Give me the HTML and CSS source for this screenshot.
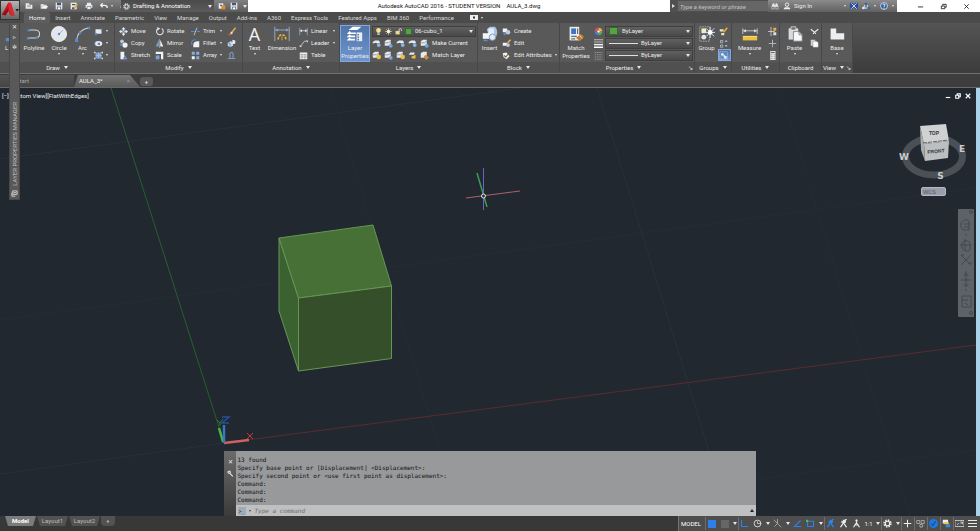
FILE: index.html
```html
<!DOCTYPE html>
<html lang="en">
<head>
<meta charset="utf-8">
<title>Autodesk AutoCAD 2016</title>
<link rel="stylesheet" href="styles.css">
</head>
<body>
<svg class="sprite" aria-hidden="true">
  <symbol id="new" viewBox="0 0 12 12"><path d="M1 2h5l1 2h4v6H1z" fill="#e9edf2"/><path d="M3 5h6M3 7h6" stroke="#8d949c"/></symbol>
  <symbol id="open" viewBox="0 0 12 12"><path d="M1 3h4l1 1h4v2H4L2 10H1z" fill="#d5dbe2"/><path d="M4 6h8l-2 4H2z" fill="#f1f4f7"/></symbol>
  <symbol id="save" viewBox="0 0 12 12"><path d="M1 1h10v10H1z" fill="#dbe3ef"/><path d="M3 1h6v4H3zM3 7h6v4H3z" fill="#4c5665"/><path d="M4 8h4v3H4z" fill="#fff"/></symbol>
  <symbol id="saveas" viewBox="0 0 12 12"><path d="M1 1h9v10H1z" fill="#e6e9ee"/><path d="M3 3h5v2H3zM3 8h4v3H3z" fill="#4c5665"/><path d="M5 9l5-6 2 1-5 6z" fill="#e6a436"/></symbol>
  <symbol id="print" viewBox="0 0 12 12"><path d="M3 1h6v3H3zM1 4h10v5H1z" fill="#e8ecf1"/><path d="M3 7h6v4H3z" fill="#fff" stroke="#59616c"/></symbol>
  <symbol id="undo" viewBox="0 0 12 12"><path d="M4 2L1 5l3 3M1 5h6q4 0 4 4" fill="none" stroke="#eee" stroke-width="2"/></symbol>
  <symbol id="redo" viewBox="0 0 12 12"><path d="M8 2l3 3-3 3M11 5H5Q1 5 1 9" fill="none" stroke="#a0a0a0" stroke-width="2"/></symbol>
  <symbol id="gear" viewBox="0 0 12 12"><circle cx="6" cy="6" r="4.6" fill="none" stroke="#eee" stroke-width="2" stroke-dasharray="2 1.6"/><circle cx="6" cy="6" r="3" fill="none" stroke="#eee" stroke-width="1.6"/></symbol>
  <symbol id="lockdoc" viewBox="0 0 12 12"><path d="M1 2h7v8H1z" fill="#e8ecf1"/><path d="M5 5h6v6H5z" fill="#e08a2c"/><path d="M3 4h3v2H3z" fill="#3e6cb0"/></symbol>
  <symbol id="binoc" viewBox="0 0 12 12"><path d="M1 11V6l2-4h2v9zM11 11V6L9 2H7v9zM5 4h2v3H5z" fill="#e6e6e6"/><path d="M2 7h2v3H2zM8 7h2v3H8z" fill="#4b4b4b"/></symbol>
  <symbol id="person" viewBox="0 0 12 12"><circle cx="6" cy="4" r="2.6" fill="none" stroke="#eee" stroke-width="1.4"/><path d="M1 11q0-3 3-3h4q3 0 3 3z" fill="#eee"/></symbol>
  <symbol id="xchange" viewBox="0 0 12 12"><path d="M0 1h4l2 3 2-3h4v9H8L6 7l-2 3H0z" fill="#234f9c"/><path d="M2 2l8 8M10 2l-8 8" stroke="#d3e0f2" stroke-width="1.4"/></symbol>
  <symbol id="a360" viewBox="0 0 12 12"><path d="M6 2L2 9h8z" fill="none" stroke="#dce6f5" stroke-width="1.5"/><circle cx="6" cy="3" r="2" fill="#2f5fae"/><circle cx="2" cy="9" r="2" fill="#dce6f5"/><circle cx="10" cy="9" r="2" fill="#2f5fae"/></symbol>
  <symbol id="help" viewBox="0 0 12 12"><circle cx="6" cy="6" r="5.2" fill="#34609c" stroke="#fff"/><path d="M4.300 4.500Q4.500 3 6 3t1.700 1.500Q7.700 5.500 6 6.500V7.500M6 8.500v1.500" fill="none" stroke="#fff" stroke-width="1.300"/></symbol>
  <symbol id="line" viewBox="0 0 20 20"><path d="M3 17L17 3" stroke="#ccc"/><path d="M1 15h4v4H1zM15 1h4v4h-4z" fill="#568ad4"/></symbol>
  <symbol id="polyline" viewBox="0 0 20 20"><path d="M4 5h7q6 0 6 5t-6 5H3" fill="none" stroke="#d2d5d8" stroke-width="1.3"/><path d="M2 4h3v3H2zM1 14h3v3H1zM12 13h3v3h-3z" fill="#568ad4"/></symbol>
  <symbol id="circle" viewBox="0 0 20 20"><circle cx="10" cy="10" r="9.500" fill="#e3e7eb" stroke="#f6f7f8"/><path d="M10 10l5-5" stroke="#7ba2d4"/><circle cx="10" cy="10" r="1.500" fill="#568ad4"/></symbol>
  <symbol id="arc" viewBox="0 0 20 20"><path d="M2 18Q3 5 18 2" fill="none" stroke="#d2d5d8" stroke-width="1.300"/><path d="M0 16h4v4H0zM16 1h3v3h-3zM5 7h3v3H5z" fill="#568ad4"/></symbol>
  <symbol id="rect" viewBox="0 0 12 12"><path d="M2 3h8v6H2z" fill="#e6e9ed"/><path d="M1 8h3v3H1zM9 2h2v2H9z" fill="#568ad4"/></symbol>
  <symbol id="ellipse" viewBox="0 0 12 12"><ellipse cx="6" cy="6" rx="5" ry="3.500" fill="#e6e9ed"/><path d="M5 5h3v3H5zM0 5h2v2H0z" fill="#568ad4"/></symbol>
  <symbol id="hatch" viewBox="0 0 12 12"><path d="M2 2h8v8H2z" fill="#7fa3d6"/><path d="M2 6h8M6 2v8" stroke="#a9c2e6"/><path d="M0 1h2v2H0zM10 1h2v2h-2zM0 9h2v2H0zM10 9h2v2h-2z" fill="#ddd"/></symbol>
  <symbol id="move" viewBox="0 0 12 12"><path d="M6 0l2.500 3H7v2h2V3.500L12 6 9 8.500V7H7v2h1.500L6 12 3.500 9H5V7H3v1.500L0 6l3-2.500V5h2V3H3.500z" fill="#e6e9ed"/><circle cx="6" cy="6" r="1.500" fill="#568ad4"/></symbol>
  <symbol id="copy" viewBox="0 0 12 12"><circle cx="4" cy="3" r="2.500" fill="#bfc9d6"/><circle cx="8" cy="8" r="3.500" fill="#f0f2f4"/><path d="M1 6h3v3H1z" fill="#568ad4"/></symbol>
  <symbol id="stretch" viewBox="0 0 12 12"><path d="M2 1h5v10H2z" fill="#f0f2f4"/><path d="M7 5l4 6H7z" fill="#8db0de"/><path d="M6 8h3v3H6z" fill="#568ad4"/></symbol>
  <symbol id="rotate" viewBox="0 0 12 12"><path d="M4 2a4.500 4.500 0 1 0 5 0" fill="none" stroke="#d9dcdf" stroke-width="1.500"/><path d="M3 0l4 2-4 3z" fill="#d9dcdf"/></symbol>
  <symbol id="mirror" viewBox="0 0 12 12"><path d="M5 1v9H1z" fill="#7ba2d4"/><path d="M7 1v9h4z" fill="#f0f2f4"/><path d="M6 0v12" stroke="#ddd" stroke-width=".6"/></symbol>
  <symbol id="scale" viewBox="0 0 12 12"><path d="M1 1h10v10H8V4H1z" fill="#f0f2f4"/><path d="M1 6h5v5H1z" fill="#7ba2d4"/></symbol>
  <symbol id="trim" viewBox="0 0 12 12"><path d="M0 6h5M8 6h4" stroke="#568ad4" stroke-width="1.500"/><path d="M8 1L4 11" stroke="#ddd"/></symbol>
  <symbol id="fillet" viewBox="0 0 12 12"><path d="M3 11V8q0-5 6-5h2v8z" fill="#f0f2f4"/><path d="M1 8V5q0-4 5-4" fill="none" stroke="#568ad4" stroke-width="1.500"/></symbol>
  <symbol id="array" viewBox="0 0 12 12"><path d="M1 1h4v4H1zM7 1h4v4H7zM7 7h4v4H7z" fill="#86aee2"/><path d="M1 7h4v4H1z" fill="#f0f2f4"/></symbol>
  <symbol id="erase" viewBox="0 0 12 12"><path d="M11 0L6 6l1 2 5-6z" fill="#e2ad50"/><path d="M6 6L4 8l2 2 2-2z" fill="#f0dfd2"/><path d="M4 8l-3 3h4l1-1z" fill="#d95a3a"/></symbol>
  <symbol id="explode" viewBox="0 0 12 12"><path d="M1 5l4-2 3 1v5L4 11 1 9z" fill="#c6d6ec"/><path d="M7 1l4 1v4L8 7z" fill="#e9eef5"/><path d="M1 5l3 1v5" fill="none" stroke="#4e79b8"/></symbol>
  <symbol id="offset" viewBox="0 0 12 12"><path d="M1 10h3V7q-1-5 2-5t2 5v3h3z" fill="none" stroke="#7f9ac2" stroke-width="1.500"/></symbol>
  <symbol id="dimension" viewBox="0 0 20 20"><path d="M1 1v18M19 1v18M2 5h16" stroke="#a9bad2"/><path d="M1 5l4-2v4zM19 5l-4-2v4z" fill="#7aa5e0"/><path d="M5 17q1-6 5-6t5 6" fill="none" stroke="#eab03a" stroke-width="2" stroke-dasharray="3 1.500"/><path d="M10 13v5" stroke="#eab03a"/></symbol>
  <symbol id="linear" viewBox="0 0 12 12"><path d="M1 1v10M11 1v10" stroke="#8cb0e0"/><path d="M1 5h10" stroke="#ddd"/><path d="M1 5l3-2v4zM11 5L8 3v4z" fill="#ddd"/></symbol>
  <symbol id="leader" viewBox="0 0 12 12"><path d="M2 10L7 3h3" fill="none" stroke="#ddd"/><path d="M1 11V8l3 2zM9 2h3v3" fill="#ddd"/></symbol>
  <symbol id="table" viewBox="0 0 12 12"><path d="M1 2h10v9H1z" fill="#f0f2f4"/><path d="M1 5h10M1 8h10M4 4v7M8 4v7" stroke="#777" stroke-width=".7"/></symbol>
  <symbol id="layers" viewBox="0 0 20 20"><path d="M7 1h11l-5 4H2z" fill="#fff"/><path d="M4 7l-2 2h9M4 11l-2 2h8M4 15l-2 2h8" fill="none" stroke="#fff" stroke-width="2"/><path d="M12 8h7v11h-7z" fill="#e9edf2"/><path d="M13 10h2v2h-2zM13 13h2v2h-2zM13 16h2v2h-2z" fill="#5c7fae"/></symbol>
  <symbol id="bulb" viewBox="0 0 12 12"><path d="M6 0q4 0 4 3.500Q10 6 8 8H4Q2 6 2 3.500 2 0 6 0z" fill="#f6e58c"/><path d="M4 9h4v3H4z" fill="#c8c8c8"/></symbol>
  <symbol id="sun" viewBox="0 0 12 12"><path d="M6 0v12M0 6h12M2 2l8 8M10 2l-8 8" stroke="#e8e2bb"/><circle cx="6" cy="6" r="3" fill="#fbf4c6"/></symbol>
  <symbol id="lock" viewBox="0 0 12 12"><path d="M1 5h7v6H1z" fill="#f0d88a"/><path d="M7 6V3q0-2 2-2t2 2v2" fill="none" stroke="#ddd" stroke-width="1.500"/></symbol>
  <symbol id="lay1" viewBox="0 0 12 12"><path d="M1 4l3-2h5l2 3-4 1-2-1-4 1z" fill="#e6e9ed"/><circle cx="9" cy="8" r="2.500" fill="#8bb4e8"/></symbol>
  <symbol id="lay2" viewBox="0 0 12 12"><path d="M1 3l3-2h5v6l-3 2H1z" fill="#e6e9ed"/><path d="M1 5h5l3-2" fill="none" stroke="#7b8796"/><circle cx="9" cy="9" r="2.500" fill="#77a5e0"/></symbol>
  <symbol id="lay3" viewBox="0 0 12 12"><path d="M1 3l3-2h5v6l-3 2H1z" fill="#e6e9ed"/><path d="M1 5h5l3-2" fill="none" stroke="#7b8796"/><circle cx="9" cy="8" r="3" fill="#efc03c"/></symbol>
  <symbol id="lay4" viewBox="0 0 12 12"><path d="M1 5l2-3h6l-1 3z" fill="#e6e9ed"/><path d="M4 8l6-3v5H6z" fill="#efc03c"/></symbol>
  <symbol id="match" viewBox="0 0 12 12"><path d="M1 3l3-2h5v6l-3 2H1z" fill="#e6e9ed"/><path d="M5 7l3-2 4 4-4 3z" fill="#d58b3c"/></symbol>
  <symbol id="insert" viewBox="0 0 20 20"><path d="M6 4l4-3h6q3 2 3 8l-2 7-8-2z" fill="#a9c4e8"/><path d="M8 3h7v8H8z" fill="#e6edf7"/><path d="M1 9h10v7H1z" fill="#f4f6f8"/><circle cx="13" cy="14" r="4" fill="#e4e9ee" stroke="#6c8cba"/><path d="M2 18h5" stroke="#568ad4" stroke-width="2"/></symbol>
  <symbol id="create" viewBox="0 0 12 12"><path d="M1 2h6v5H1z" fill="#f0f2f4"/><circle cx="8" cy="7" r="3" fill="#bdcbdc"/><path d="M2 8h3v3H2z" fill="#568ad4"/></symbol>
  <symbol id="edit" viewBox="0 0 12 12"><path d="M1 5h6v4H1z" fill="#f0f2f4"/><circle cx="8" cy="8" r="2.500" fill="#bdcbdc"/><path d="M7 4l4-4 1 2-4 4z" fill="#efb03c"/></symbol>
  <symbol id="attr" viewBox="0 0 12 12"><path d="M1 3l5-1 4 5-4 4-4-3z" fill="#f0f2f4"/><path d="M3 6l2 2 5-6" fill="none" stroke="#795a24" stroke-width="1.500"/></symbol>
  <symbol id="matchprop" viewBox="0 0 20 20"><path d="M2 1h12v17H2z" fill="#e9edf2"/><path d="M4 3h6v7H4z" fill="#3a75bd"/><path d="M4 13h7M4 16h5M12 3v7" stroke="#66707c" stroke-width="1.500"/><path d="M10 15l6-5 4 3-5 6z" fill="#c27b31"/><path d="M14 11l4 5" stroke="#f2ddb9"/></symbol>
  <symbol id="wheel" viewBox="0 0 12 12"><path d="M6 6V1a5 5 0 0 1 5 5z" fill="#efb03c"/><path d="M6 6h5a5 5 0 0 1-5 5z" fill="#5eab4d"/><path d="M6 6v5a5 5 0 0 1-5-5z" fill="#4a7ed0"/><path d="M6 6H1a5 5 0 0 1 5-5z" fill="#da4e6d"/><circle cx="6" cy="6" r="1.500" fill="#fff"/></symbol>
  <symbol id="weight" viewBox="0 0 12 12"><path d="M0 1h12M0 4h12" stroke="#ddd"/><path d="M0 7.500h12" stroke="#eee" stroke-width="2"/><path d="M0 11h12" stroke="#fff" stroke-width="2"/></symbol>
  <symbol id="ltype" viewBox="0 0 12 12"><path d="M1 2h10M1 5h10M1 8h10M1 11h10" stroke="#aaa" stroke-dasharray="2 1"/></symbol>
  <symbol id="group" viewBox="0 0 20 20"><path d="M1 1h12v18H1z" fill="none" stroke="#bbb" stroke-dasharray="2 1"/><path d="M3 3h6v6H3z" fill="#f2edc2"/><circle cx="6" cy="14" r="3" fill="#e4e8ed"/><path d="M14 1v14M7 8h13M9 3l10 10M19 3L9 13" stroke="#cfe3fc" stroke-width="1.200"/><circle cx="14" cy="8" r="3" fill="#fff"/></symbol>
  <symbol id="ungroup" viewBox="0 0 12 12"><path d="M1 3h5v3H1zM3 8h4v3H3z" fill="#e9e5bd"/><path d="M6 7l5-6" stroke="#efb03c" stroke-width="2"/></symbol>
  <symbol id="gredit" viewBox="0 0 12 12"><path d="M2 2h3v3H2zM2 8h3v3H2z" fill="none" stroke="#bfc7d1"/><path d="M8 3h3M8 9h3" stroke="#9ab4da" stroke-width="2"/></symbol>
  <symbol id="gsel" viewBox="0 0 12 12"><path d="M1 1h10v10H1z" fill="none" stroke="#b8d1f5" stroke-dasharray="2 1"/><path d="M3 3h3v3H3zM7 7h3v3H7z" fill="#fff"/><path d="M6 4l4 4H6z" fill="#dce9fb"/></symbol>
  <symbol id="measure" viewBox="0 0 20 20"><path d="M1 3v7M19 3v7M2 6h16" stroke="#ddd"/><path d="M1 6l4-2v4zM19 6l-4-2v4z" fill="#ddd"/><path d="M1 13h18v5H1z" fill="#f1c137"/><path d="M1 13h18" stroke="#fff3b6"/></symbol>
  <symbol id="qsel" viewBox="0 0 12 12"><path d="M4 0v12M0 6h9" stroke="#ddd"/><path d="M7 1h4v4H7z" fill="#eba948"/><path d="M7 7h4v4H7z" fill="#ddd"/></symbol>
  <symbol id="point" viewBox="0 0 12 12"><path d="M6 1v10M1 6h10" stroke="#bfd0e6"/></symbol>
  <symbol id="calc" viewBox="0 0 12 12"><path d="M3 0h7v12H3z" fill="#e6e9ed"/><path d="M4 2h5" stroke="#666" stroke-width="1.500"/><path d="M4 5h5M4 7.500h5M4 10h5" stroke="#777" stroke-dasharray="1 1"/></symbol>
  <symbol id="paste" viewBox="0 0 20 20"><path d="M2 3h12v14H2z" fill="#d9dcdf"/><path d="M5 1h6v4H5z" fill="#6a6d70" stroke="#ddd"/><path d="M8 7h7l4 4v8H8z" fill="#f6f7f8" stroke="#727578"/><path d="M15 7v4h4" fill="none" stroke="#727578"/></symbol>
  <symbol id="cut" viewBox="0 0 12 12"><path d="M1 3l5 4 5-4M4 9l2-2 2 2" fill="none" stroke="#e9e9e9" stroke-width="1.500"/></symbol>
  <symbol id="clip" viewBox="0 0 12 12"><path d="M1 1h6v8H1z" fill="#cfd3d8"/><path d="M4 3h5l2 2v6H4z" fill="#fff" stroke="#777" stroke-width=".5"/></symbol>
  <symbol id="base" viewBox="0 0 20 20"><path d="M2 3h7v6h10v8H2z" fill="#eceef0"/></symbol>
  <symbol id="wrench" viewBox="0 0 12 12"><path d="M2 2v3l3 1 5 5M2 2l3 0 1 3" fill="none" stroke="#eee" stroke-width="1.800"/></symbol>
  <symbol id="ortho" viewBox="0 0 12 12"><path d="M2 1v9h9" fill="none" stroke="#2e7fe8" stroke-width="1.500"/></symbol>
  <symbol id="polar" viewBox="0 0 12 12"><circle cx="6" cy="6" r="4.500" fill="none" stroke="#ddd" stroke-width="1.200"/><path d="M6 6h5M6 6V3" stroke="#ddd"/></symbol>
  <symbol id="iso" viewBox="0 0 12 12"><path d="M1 1l10 10M6 0v6L2 10" fill="none" stroke="#bbb"/></symbol>
  <symbol id="otrack" viewBox="0 0 12 12"><path d="M10 2L2 10h9" fill="none" stroke="#2e7fe8" stroke-width="1.500"/></symbol>
  <symbol id="osnap" viewBox="0 0 12 12"><path d="M2 3h8v7H2z" fill="none" stroke="#2e7fe8" stroke-width="1.500"/><path d="M0 1h3v3H0z" fill="#4cba57"/></symbol>
  <symbol id="anno" viewBox="0 0 12 12"><path d="M6 1v4M6 5L2 11M6 5l4 6M3 8h6" fill="none" stroke="currentColor" stroke-width="1.600"/><circle cx="6" cy="2" r="1.500" fill="currentColor"/></symbol>
  <symbol id="annoauto" viewBox="0 0 12 12"><path d="M6 1v4M6 5L2 11M6 5l4 6M3 4h6M8 2l2-2" fill="none" stroke="currentColor" stroke-width="1.800"/><circle cx="7" cy="3" r="2" fill="currentColor"/></symbol>
  <symbol id="plus" viewBox="0 0 12 12"><path d="M6 1v10M1 6h10" stroke="#eee" stroke-width="1.400"/></symbol>
  <symbol id="isolate" viewBox="0 0 12 12"><path d="M1 2h4v4H1zM7 2h4v4H7z" fill="none" stroke="#bbb"/><circle cx="7" cy="9" r="2" fill="none" stroke="#ccc"/></symbol>
  <symbol id="hw" viewBox="0 0 12 12"><circle cx="6" cy="6" r="6" fill="#1b79e5"/><path d="M3 6l2 3 4-6" fill="none" stroke="#253b59" stroke-width="1.300"/></symbol>
  <symbol id="perf" viewBox="0 0 12 12"><path d="M1 1h7v5H1z" fill="#eee"/><path d="M3 4h6v3H3z" fill="#e4cf45"/><path d="M5 7h6v4H5z" fill="#3c87d8"/></symbol>
  <symbol id="clean" viewBox="0 0 12 12"><path d="M0 2h12v8H0z" fill="none" stroke="#ddd"/><path d="M3 8l2-3M7 7l3-3M7 4h3v3" fill="none" stroke="#ddd"/></symbol>
  <symbol id="menu" viewBox="0 0 12 12"><path d="M0 2h12M0 6h12M0 10h12" stroke="#eee" stroke-width="1.300"/></symbol>
</svg>

<div class="app">
  <header class="header">
    <button class="logo" aria-label="Application menu">
      <svg viewBox="0 0 20 20"><path d="M8 2L1 15l4 1 3-5 3 5h4L11 2z" fill="#c51820"/><path d="M8 2l1 8 3 6h3L11 2z" fill="#e0272d"/><path d="M1 15l7-7v3l-3 5z" fill="#8e1016"/><path d="M16 9h4l-2 3z" fill="#222"/></svg>
    </button>
    <div class="titlebar">
      <div class="quick">
        <button aria-label="New"><svg><use href="#new"/></svg></button>
        <button aria-label="Open"><svg><use href="#open"/></svg></button>
        <button aria-label="Save"><svg><use href="#save"/></svg></button>
        <button aria-label="Save as"><svg><use href="#saveas"/></svg></button>
        <button aria-label="Plot"><svg><use href="#print"/></svg></button>
        <button aria-label="Undo"><svg><use href="#undo"/></svg></button><i class="dot"></i>
        <button aria-label="Redo"><svg><use href="#redo"/></svg></button><i class="dot"></i>
      </div>
      <div class="workspace"><svg><use href="#gear"/></svg>
        <select aria-label="Workspace"><option>Drafting &amp; Annotation</option></select><i class="arrow"></i>
      </div>
      <div class="quick quick-end">
        <button aria-label="Workspace lock"><svg><use href="#lockdoc"/></svg></button>
        <button aria-label="Plot preview"><svg><use href="#save"/></svg></button>
        <i class="arrow"></i>
      </div>
      <h1 class="caption"><span>Autodesk AutoCAD 2016 - STUDENT VERSION</span><span>AULA_3.dwg</span></h1>
      <div class="search"><i class="arrow side"></i><input type="text" aria-label="Search" placeholder="Type a keyword or phrase"></div>
      <div class="account">
        <button aria-label="Find"><svg><use href="#binoc"/></svg></button>
        <button class="signin"><svg><use href="#person"/></svg>Sign In</button><i class="dot"></i>
        <button aria-label="Exchange"><svg><use href="#xchange"/></svg></button>
        <button aria-label="A360"><svg><use href="#a360"/></svg></button><i class="dot"></i>
        <button aria-label="Help"><svg><use href="#help"/></svg></button><i class="dot"></i>
      </div>
      <div class="window">
        <button aria-label="Minimize"><svg viewBox="0 0 8 8"><path d="M1 4.500h6"/></svg></button>
        <button aria-label="Restore"><svg viewBox="0 0 8 8"><path d="M1.500 3.500h4v3h-4zM3 3V1.500h4V5H6"/></svg></button>
        <button aria-label="Close"><svg viewBox="0 0 8 8"><path d="M1.500 1.500l5 5M6.500 1.500l-5 5"/></svg></button>
      </div>
    </div>
    <nav class="tabs">
      <button class="tab active">Home</button><button class="tab">Insert</button><button class="tab">Annotate</button><button class="tab">Parametric</button><button class="tab">View</button><button class="tab">Manage</button><button class="tab">Output</button><button class="tab">Add-ins</button><button class="tab">A360</button><button class="tab">Express Tools</button><button class="tab">Featured Apps</button><button class="tab">BIM 360</button><button class="tab">Performance</button>
      <button class="minimize" aria-label="Minimize ribbon"><svg viewBox="0 0 8 5"><path d="M0 0h8v5H0z" fill="#eee"/><path d="M3 1.500h2v2H3z" fill="#333"/></svg><i class="dot"></i></button>
    </nav>
  </header>

  <section class="ribbon" aria-label="Ribbon">
    <div class="panel draw">
      <div class="tools">
        <button class="big line"><svg><use href="#line"/></svg>L</button>
        <button class="big"><svg><use href="#polyline"/></svg>Polyline</button>
        <button class="big"><svg><use href="#circle"/></svg>Circle<i class="dot"></i></button>
        <button class="big"><svg><use href="#arc"/></svg>Arc<i class="dot"></i></button>
        <div class="stack">
          <button aria-label="Rectangle"><svg><use href="#rect"/></svg><i class="dot"></i></button>
          <button aria-label="Ellipse"><svg><use href="#ellipse"/></svg><i class="dot"></i></button>
          <button aria-label="Hatch"><svg><use href="#hatch"/></svg><i class="dot"></i></button>
        </div>
      </div>
      <button class="title">Draw<i class="arrow"></i></button>
    </div>
    <div class="panel modify">
      <div class="tools">
        <div class="stack">
          <button><svg><use href="#move"/></svg>Move</button>
          <button><svg><use href="#copy"/></svg>Copy</button>
          <button><svg><use href="#stretch"/></svg>Stretch</button>
        </div>
        <div class="stack">
          <button><svg><use href="#rotate"/></svg>Rotate</button>
          <button><svg><use href="#mirror"/></svg>Mirror</button>
          <button><svg><use href="#scale"/></svg>Scale</button>
        </div>
        <div class="stack spread">
          <button><svg><use href="#trim"/></svg>Trim<i class="dot"></i></button>
          <button><svg><use href="#fillet"/></svg>Fillet<i class="dot"></i></button>
          <button><svg><use href="#array"/></svg>Array<i class="dot"></i></button>
        </div>
        <div class="stack">
          <button aria-label="Erase"><svg><use href="#erase"/></svg></button>
          <button aria-label="Explode"><svg><use href="#explode"/></svg></button>
          <button aria-label="Offset"><svg><use href="#offset"/></svg></button>
        </div>
      </div>
      <button class="title">Modify<i class="arrow"></i></button>
    </div>
    <div class="panel annotation">
      <div class="tools">
        <button class="big"><span class="letter">A</span>Text<i class="dot"></i></button>
        <button class="big"><svg><use href="#dimension"/></svg>Dimension</button>
        <div class="stack spread">
          <button><svg><use href="#linear"/></svg>Linear<i class="dot"></i></button>
          <button><svg><use href="#leader"/></svg>Leader<i class="dot"></i></button>
          <button><svg><use href="#table"/></svg>Table</button>
        </div>
      </div>
      <button class="title">Annotation<i class="arrow"></i></button>
    </div>
    <div class="panel layer">
      <div class="tools">
        <button class="big pressed"><svg><use href="#layers"/></svg>Layer<br>Properties</button>
        <div class="rows">
          <div class="combo"><svg><use href="#bulb"/></svg><svg><use href="#sun"/></svg><svg><use href="#lock"/></svg><i class="swatch"></i>
            <select aria-label="Layer"><option>06-cubo_1</option></select><i class="arrow"></i></div>
          <div class="strip">
            <button aria-label="Off"><svg><use href="#lay1"/></svg></button><button aria-label="Isolate"><svg><use href="#lay2"/></svg></button><button aria-label="Freeze"><svg><use href="#lay1"/></svg></button><button aria-label="Lock"><svg><use href="#lay1"/></svg></button><button><svg><use href="#lay2"/></svg>Make Current</button>
          </div>
          <div class="strip">
            <button aria-label="Turn all on"><svg><use href="#lay3"/></svg></button><button aria-label="Unisolate"><svg><use href="#lay2"/></svg></button><button aria-label="Thaw all"><svg><use href="#lay3"/></svg></button><button aria-label="Unlock"><svg><use href="#lay4"/></svg></button><button><svg><use href="#match"/></svg>Match Layer</button>
          </div>
        </div>
      </div>
      <button class="title">Layers<i class="arrow"></i></button>
    </div>
    <div class="panel block">
      <div class="tools">
        <button class="big"><svg><use href="#insert"/></svg>Insert</button>
        <div class="stack spread">
          <button><svg><use href="#create"/></svg>Create</button>
          <button><svg><use href="#edit"/></svg>Edit</button>
          <button><svg><use href="#attr"/></svg>Edit Attributes<i class="dot"></i></button>
        </div>
      </div>
      <button class="title">Block<i class="arrow"></i></button>
    </div>
    <div class="panel props">
      <div class="tools">
        <button class="big"><svg><use href="#matchprop"/></svg>Match<br>Properties</button>
        <div class="rows">
          <div class="field"><svg><use href="#wheel"/></svg><div class="combo"><i class="swatch"></i><select aria-label="Object color"><option>ByLayer</option></select><i class="arrow"></i></div></div>
          <div class="field"><svg><use href="#weight"/></svg><div class="combo"><i class="rule"></i><select aria-label="Lineweight"><option>ByLayer</option></select><i class="arrow"></i></div></div>
          <div class="field"><svg><use href="#ltype"/></svg><div class="combo"><i class="rule"></i><select aria-label="Linetype"><option>ByLayer</option></select><i class="arrow"></i></div></div>
        </div>
      </div>
      <div class="foot"><button class="title">Properties<i class="arrow"></i></button><button class="launch" aria-label="Properties palette">↘</button></div>
    </div>
    <div class="panel groups">
      <div class="tools">
        <button class="big"><svg><use href="#group"/></svg>Group</button>
        <div class="stack">
          <button aria-label="Ungroup"><svg><use href="#ungroup"/></svg></button>
          <button aria-label="Group edit"><svg><use href="#gredit"/></svg></button>
          <button class="pressed" aria-label="Group selection"><svg><use href="#gsel"/></svg></button>
        </div>
      </div>
      <button class="title">Groups<i class="arrow"></i></button>
    </div>
    <div class="panel utilities">
      <div class="tools">
        <button class="big"><svg><use href="#measure"/></svg>Measure<i class="dot"></i></button>
        <div class="stack">
          <button aria-label="Quick select"><svg><use href="#qsel"/></svg></button>
          <button aria-label="Point"><svg><use href="#point"/></svg></button>
          <button aria-label="Calculator"><svg><use href="#calc"/></svg></button>
        </div>
      </div>
      <button class="title">Utilities<i class="arrow"></i></button>
    </div>
    <div class="panel clipboard">
      <div class="tools">
        <button class="big"><svg><use href="#paste"/></svg>Paste<i class="dot"></i></button>
        <div class="stack">
          <button aria-label="Cut"><svg><use href="#cut"/></svg></button>
          <button aria-label="Copy clip"><svg><use href="#clip"/></svg></button>
        </div>
      </div>
      <button class="title">Clipboard</button>
    </div>
    <div class="panel view">
      <div class="tools"><button class="big"><svg><use href="#base"/></svg>Base<i class="dot"></i></button></div>
      <div class="foot"><button class="title">View<i class="arrow"></i></button><button class="launch" aria-label="View settings">↘</button></div>
    </div>
  </section>

  <nav class="files">
    <button class="file start">Start</button>
    <button class="file current">AULA_3*<span>×</span></button>
    <button class="file add" aria-label="New drawing">+</button>
  </nav>

  <main class="viewport">
    <svg class="scene" viewBox="0 88 976 428" preserveAspectRatio="xMinYMin slice" aria-label="Model space">
      <g stroke="#27313a" fill="none">
        <path d="M0 159L520 88M597 88l132 428M0 474l224-31"/>
      </g>
      <g stroke="#242d35" fill="none">
        <path d="M0 320l976-132M330 88l130 428M480 516l496-66M780 88l130 428"/>
      </g>
      <path d="M111 88l113 355" stroke="#26602f"/>
      <path d="M224 443l752-98" stroke="#5a2b32"/>
      <g stroke="#669655" stroke-width="1" stroke-linejoin="round">
        <path d="M279 238l19.500 60v73L279 311z" fill="#3c6130"/>
        <path d="M279 238l94-13 18.500 61-93 12z" fill="#467036"/>
        <path d="M298.500 298l93-12v72.500l-93 12.500z" fill="#344f29"/>
      </g>
      <path d="M466 198l54-7" stroke="#b06068"/><path d="M477 173l10 34" stroke="#3f9a55" stroke-width="1.500"/><path d="M483.500 168v42" stroke="#6267c4"/>
      <circle cx="483.500" cy="196" r="2" fill="#2b3137" stroke="#e6e6e6"/>
      <path d="M224 443l25-3" stroke="#d2605c" stroke-width="2.500"/><path d="M223 442l-4-14" stroke="#45b648" stroke-width="2.500"/><path d="M224 443v-18" stroke="#3f74c4" stroke-width="2.500"/>
      <path d="M247 433l6 6M253 433l-6 6" stroke="#c63a40"/><path d="M222 417h7l-7 6h7" fill="none" stroke="#274e9d" stroke-width="1.500"/><path d="M217 420l3 3 3-4M220 423v3" fill="none" stroke="#2c7d38"/>
    </svg>
    <div class="viewlabel">[−][Custom View][FlatWithEdges]</div>
    <div class="docbuttons">
      <button aria-label="Minimize drawing"><svg viewBox="0 0 8 8"><path d="M1 6h6"/></svg></button>
      <button aria-label="Restore drawing"><svg viewBox="0 0 8 8"><path d="M1 3h4v4H1zM3 3V1h4v4H5"/></svg></button>
      <button aria-label="Close drawing"><svg viewBox="0 0 8 8"><path d="M1 1l6 6M7 1L1 7"/></svg></button>
    </div>
    <svg class="cube" viewBox="897 120 72 64" aria-label="View cube">
      <ellipse cx="934" cy="156.500" rx="28.500" ry="18.500" fill="none" stroke="#4a5056" stroke-width="7"/>
      <path d="M920 126l26-2 3 17-25 3z" fill="#d0d1d1"/><path d="M924 144l25-3-1 17-23 3z" fill="#bdbebf"/><path d="M920 126l4 18 1 17-4-11z" fill="#a9abad"/>
      <path d="M923 143l26-3" stroke="#62676c" stroke-dasharray="4 1"/>
      <text x="934" y="134.500" class="face">TOP</text><text x="936" y="153" class="face" transform="rotate(-5 936 151)">FRONT</text>
      <text x="904" y="160" class="compass">W</text><text x="962" y="152" class="compass">E</text><text x="940.500" y="179" class="compass">S</text>
    </svg>
    <button class="wcs">WCS</button>
    <aside class="navbar" aria-label="Navigation bar">
      <svg viewBox="0 0 16 108" fill="none" stroke="#434950"><circle cx="13" cy="3" r="1.500"/><path d="M5 12q3-3 6 0v9H5l-2-3v-4zM6 15h6M6 18h5"/><path d="M8 25v2M8 62v2M8 80v2"/><path d="M4 34q4-5 8 0v7q-5 3-8-2zM2 36h11M7 30v12"/><path d="M3 46l10 10M13 46L3 56M10 54h4M3 46h3"/><path d="M8 64v14M3 71h10M6 67l2-3 2 3M6 75l2 3 2-3"/><path d="M4 87h9v11H4zM4 91h6M7 94l3 2"/><circle cx="13" cy="104" r="1.500"/></svg>
    </aside>
    <section class="command" aria-label="Command line">
      <div class="grip"><button aria-label="Close command line">✕</button><button aria-label="Customize"><svg><use href="#wrench"/></svg></button></div>
      <div class="console">
        <pre>13 found
Specify base point or [Displacement] &lt;Displacement&gt;:
Specify second point or &lt;use first point as displacement&gt;:
Command:
Command:
Command:</pre>
        <div class="prompt"><span class="prompticon">&gt;_</span><i class="dot"></i><input type="text" aria-label="Command" placeholder="Type a command"><i class="arrow up"></i></div>
      </div>
    </section>
  </main>

  <footer class="status">
    <nav class="layouts"><button class="layout on">Model</button><button class="layout">Layout1</button><button class="layout">Layout2</button><button class="layout plus" aria-label="New layout">+</button></nav>
    <div class="toggles">
      <button class="model">MODEL</button><hr>
      <button aria-label="Grid"><i class="grid lit"></i></button><button aria-label="Snap"><i class="grid"></i></button><span class="drop"><i class="arrow"></i></span><hr>
      <button aria-label="Ortho"><svg><use href="#ortho"/></svg></button><button aria-label="Polar"><svg><use href="#polar"/></svg></button><span class="drop"><i class="arrow"></i></span>
      <button aria-label="Isometric"><svg><use href="#iso"/></svg></button><span class="drop"><i class="arrow"></i></span>
      <button aria-label="Tracking"><svg><use href="#otrack"/></svg></button><button aria-label="Object snap"><svg><use href="#osnap"/></svg></button><span class="drop"><i class="arrow"></i></span><hr>
      <button class="blue" aria-label="Annotation visibility"><svg><use href="#annoauto"/></svg></button><button aria-label="Auto scale"><svg><use href="#annoauto"/></svg></button><button aria-label="Annotation scale"><svg><use href="#anno"/></svg></button>
      <button class="ratio">1:1</button><span class="drop"><i class="arrow"></i></span><hr>
      <button aria-label="Settings"><svg><use href="#gear"/></svg></button><span class="drop"><i class="arrow"></i></span><hr>
      <button aria-label="Monitor"><svg><use href="#plus"/></svg></button><hr>
      <button aria-label="Isolate objects"><svg><use href="#isolate"/></svg></button><hr>
      <button aria-label="Hardware acceleration"><svg><use href="#hw"/></svg></button><hr>
      <button aria-label="Graphics"><svg><use href="#perf"/></svg></button><hr>
      <button aria-label="Clean screen"><svg><use href="#clean"/></svg></button><button aria-label="Customization"><svg><use href="#menu"/></svg></button>
    </div>
  </footer>

  <aside class="palette" aria-label="Layer properties manager">
    <div class="paletteicons"><button aria-label="Close palette">✕</button><button aria-label="Auto-hide">▹</button><button aria-label="Palette settings">✲</button></div>
    <span class="palettename">LAYER PROPERTIES MANAGER</span>
    <svg viewBox="0 0 8 8"><path d="M2 1h5v4H2zM1 3v4h4M3 3h3" fill="none" stroke="#ddd"/></svg>
  </aside>
</div>
</body>
</html>
```
FILE: styles.css
```css
* { box-sizing: border-box; }

body {
  margin: 0;
  background: #3a3a3a;
  color: #ececec;
  font: 6px/8px Roboto, "Open Sans", sans-serif;
}

button, select, input {
  margin: 0;
  padding: 0;
  border: 0;
  border-radius: 0;
  background: none;
  color: inherit;
  font: inherit;
  appearance: none;
  outline: 0;
}

button { white-space: nowrap; }
svg { display: block; flex: none; width: 9px; height: 9px; }
.sprite { display: none; }

.app {
  position: relative;
  display: flex;
  flex-direction: column;
  min-height: 100vh;
  overflow: hidden;
}

/* Small markers */
.arrow, .dot {
  flex: none;
  width: 0;
  height: 0;
  border: 2px solid transparent;
  border-top: 3px solid #e6e6e6;
  border-bottom: 0;
}
.dot { border-width: 2px 1px 0; }
.arrow.side { border: 2px solid transparent; border-left: 3px solid #ddd; border-right: 0; }
.arrow.up { border: 2px solid transparent; border-top: 0; border-bottom: 3px solid #222; }

/* Header */
.header {
  display: grid;
  grid-template-columns: 20px 1fr;
  grid-template-rows: 12px 11px;
  background: #4b4b4b;
}
.logo { grid-row: 1 / 3; height: 20px; background: linear-gradient(#b5b5b5, #666); border: 1px solid #333; }
.logo svg { width: 18px; height: 18px; }

.titlebar { display: flex; background: #fff; }
.quick {
  display: flex;
  align-items: center;
  gap: 7px;
  width: 101px;
  padding-left: 5px;
  background: linear-gradient(#808080, #5c5c5c);
}
.quick svg { width: 8px; height: 8px; }
.quick .dot { margin-left: -4px; }
.quick-end { width: 34px; gap: 4px; padding-left: 4px; }
.quick-end .arrow { margin-left: 1px; }
.workspace {
  display: flex;
  align-items: center;
  gap: 3px;
  width: 93px;
  padding: 0 2px;
  background: linear-gradient(#4a4a4a, #5c5c5c);
  color: #fff;
}
.workspace svg { width: 7px; height: 7px; }
.workspace select { flex: 1; min-width: 0; }
.caption {
  flex: 1;
  display: flex;
  justify-content: center;
  align-items: center;
  gap: 6px;
  margin: 0;
  color: #111;
  font-size: 6px;
  font-weight: 400;
}
.search { display: flex; align-items: center; gap: 3px; width: 98px; padding-left: 2px; background: #505050; }
.search input { flex: 1; min-width: 0; height: 10px; padding-left: 2px; background: #666; font-style: italic; }
.search input::placeholder { color: #c4c4c4; }
.account {
  display: flex;
  align-items: center;
  gap: 4px;
  width: 129px;
  padding: 0 3px;
  background: linear-gradient(#8b8b8b, #606060);
}
.account svg { width: 8px; height: 8px; }
.signin { display: flex; align-items: center; gap: 3px; margin-right: auto; }
.window { display: flex; justify-content: space-around; align-items: center; width: 83px; padding: 0 2px 0 12px; }
.window svg { width: 7px; height: 7px; fill: none; stroke: #222; }

.tabs { display: flex; align-items: stretch; padding-left: 4px; color: #dadada; }
.tab { padding: 0 5px; }
.tab.active { background: #5d5d5d; color: #f2f2f2; border-radius: 2px 2px 0 0; }
.minimize { display: flex; align-items: center; gap: 3px; margin-left: 11px; }
.minimize svg { width: 8px; height: 5px; }

/* Ribbon */
.ribbon {
  display: flex;
  height: 51px;
  background: linear-gradient(#545454, #3c3c3c);
  border-bottom: 1px solid #707070;
}
.panel {
  display: flex;
  flex-direction: column;
  flex: none;
  background: #595959;
  border-right: 1px solid #484848;
}
.tools { display: grid; height: 39px; padding-top: 2px; }
.title { display: flex; flex: 1; justify-content: center; align-items: center; gap: 4px; background: #505050; }
.foot { display: flex; flex: 1; background: #505050; }
.launch { width: 7px; }

.draw { width: 115px; }
.draw .tools { grid-template-columns: 22px 24px 26px 21px 1fr; }
.modify { width: 128px; }
.modify .tools { grid-template-columns: 36px 36px 36px 1fr; padding-left: 3px; }
.annotation { width: 97px; }
.annotation .tools { grid-template-columns: 23px 32px 1fr; }
.layer { width: 138px; }
.layer .tools { grid-template-columns: 30px 1fr; }
.block { width: 82px; }
.block .tools { grid-template-columns: 23px 1fr; }
.props { width: 135px; }
.props .tools { grid-template-columns: 32px 1fr; }
.groups { width: 37px; }
.groups .tools { grid-template-columns: 23px 1fr; }
.utilities { width: 48px; }
.utilities .tools { grid-template-columns: 35px 1fr; }
.clipboard { width: 42px; }
.clipboard .tools { grid-template-columns: 29px 1fr; }
.view { width: 31px; }

.big {
  display: flex;
  flex-direction: column;
  align-items: center;
  align-self: start;
  height: 37px;
  line-height: 8px;
  text-align: center;
}
.big svg { width: 16px; height: 16px; margin: 1px auto 2px; }
.big .dot { margin-top: 1px; }
.big.line { width: 9px; padding-left: 5px; align-items: flex-start; overflow: hidden; }
.big.line svg { margin: 1px 0 2px; }
.letter { height: 19px; font: 18px/18px "Open Sans", sans-serif; color: #f4f4f4; }
.pressed { background: linear-gradient(#4f74a8, #6f97cf); box-shadow: inset 0 0 0 1px #83a8dc; }

.stack { display: grid; grid-template-rows: repeat(3, 12px); }
.stack button { display: flex; align-items: center; gap: 3px; padding-left: 1px; }
.spread .dot { margin-left: auto; margin-right: 4px; }

.rows { display: grid; grid-template-rows: repeat(3, 12px); align-items: center; padding: 0 1px 0 2px; }
.combo {
  display: flex;
  align-items: center;
  flex: 1;
  gap: 3px;
  height: 11px;
  min-width: 0;
  padding: 0 2px;
  background: linear-gradient(#606060, #494949);
  border: 1px solid #3f3f3f;
}
.combo svg { width: 7px; height: 7px; }
.combo select { flex: 1; min-width: 0; }
.swatch { flex: none; width: 7px; height: 7px; background: #57a147; border: 1px solid #37672f; }
.props .swatch { width: 9px; height: 8px; margin: 0 1px; }
.rule { flex: none; width: 29px; height: 1px; margin-left: 1px; background: #e0e0e0; }
.field { display: flex; align-items: center; gap: 2px; }
.strip { display: flex; gap: 3px; }
.strip button { display: flex; align-items: center; gap: 3px; }

/* Drawing file tabs */
.files {
  display: flex;
  align-items: flex-end;
  height: 14px;
  background: #3d3d3d;
  border-bottom: 1px solid #696969;
}
.file { height: 12px; color: #aaa; }
.start { width: 74px; padding-left: 16px; text-align: left; background: linear-gradient(#535353, #454545); }
.current {
  display: flex;
  justify-content: space-between;
  align-items: center;
  width: 66px;
  padding: 0 10px 0 5px;
  background: linear-gradient(#757575, #5c5c5c);
  clip-path: polygon(4px 0, 56px 0, 100% 100%, 0 100%);
  color: #f3f3f3;
}
.current span { color: #999; }
.add { width: 13px; height: 9px; margin-bottom: 1px; background: #595959; border-radius: 3px; color: #ddd; font-weight: 700; }

/* Model space */
.viewport {
  position: relative;
  flex: 1;
  min-height: 200px;
  background: #212830;
  border-right: 4px solid #a9d3ea;
}
.scene { position: absolute; inset: 0; width: 100%; height: 100%; }
.viewlabel { position: absolute; left: 2px; top: 4px; color: #eee; }
.docbuttons { position: absolute; right: 5px; top: 5px; display: flex; gap: 4px; }
.docbuttons svg { width: 6px; height: 6px; fill: none; stroke: #fff; stroke-width: 1.5; }
.cube { position: absolute; right: 7px; top: 32px; width: 72px; height: 64px; }
.face { fill: #34393e; font: 700 5px/6px "Liberation Sans", sans-serif; text-anchor: middle; }
.compass { fill: #c9cbcd; font: 700 9px/12px "DejaVu Sans", sans-serif; text-anchor: middle; }
.wcs { position: absolute; right: 30px; top: 99px; width: 25px; height: 9px; padding-left: 1px; background: #9a9daa; border: 1px solid #b5b7c3; border-radius: 2px; color: #555967; line-height: 7px; text-align: left; }
.navbar { position: absolute; right: 2px; top: 121px; width: 16px; background: #5d6266; border-radius: 1px; }
.navbar svg { width: 16px; height: 108px; }

.command {
  position: absolute;
  left: 23%;
  bottom: 0;
  display: grid;
  grid-template-columns: 12px 1fr;
  width: 54.5%;
}
.grip {
  display: flex;
  flex-direction: column;
  align-items: center;
  gap: 4px;
  padding-top: 7px;
  background: linear-gradient(#6b6b6b, #3b3b3b);
  color: #eee;
}
.grip svg { width: 7px; height: 7px; }
.console { background: #98999b; color: #111; font-family: "DejaVu Sans Mono", monospace; }
.console pre { margin: 0; padding: 5px 1px 1px; font: inherit; }
.prompt {
  display: flex;
  align-items: center;
  gap: 3px;
  height: 11px;
  padding: 0 2px;
  background: #bfc0c1;
}
.prompt .dot { border-top-color: #444; }
.prompticon { width: 8px; height: 8px; background: #9eacb8; color: #334; font-size: 5px; }
.prompt input { flex: 1; min-width: 0; font-style: italic; }
.prompt input::placeholder { color: #6b6b6b; }

/* Status bar */
.status { display: flex; justify-content: space-between; height: 15px; background: #383838; }
.layouts { display: flex; align-items: flex-start; gap: 1px; padding-left: 5px; }
.layout { width: 31px; height: 10px; background: #525252; clip-path: polygon(0 0, 100% 0, 28px 100%, 3px 100%); color: #bcbcbc; }
.layout.on { background: #7b7b7b; color: #fff; font-weight: 700; }
.layout.plus { width: 14px; clip-path: none; border-radius: 0 0 4px 4px; font-weight: 700; }
.toggles {
  display: flex;
  align-items: center;
  padding: 0 1px;
  background: #4e4e4e;
  border-left: 1px solid #747474;
}
.toggles button { display: flex; justify-content: center; width: 13px; }
.toggles .model { width: 25px; padding-right: 3px; color: #fff; }
.toggles .ratio { width: 11px; }
.toggles .blue { color: #2e86f0; }
.toggles hr { align-self: stretch; width: 1px; margin: 1px -1px 1px 0; border: 0; background: #6d6d6d; }
.drop { display: flex; justify-content: center; width: 7px; }
.grid { width: 8px; height: 8px; background: #666; }
.grid.lit { background: #2e7fe8; }

/* Docked palette */
.palette {
  position: absolute;
  left: 9px;
  top: 22px;
  display: flex;
  flex-direction: column;
  align-items: center;
  width: 11px;
  height: 178px;
  padding-bottom: 2px;
  background: #595959;
  border: 1px solid #484848;
  color: #e8e8e8;
}
.palette svg { width: 7px; height: 7px; }
.paletteicons { display: flex; flex-direction: column; gap: 2px; }
.palettename { margin-top: auto; padding-top: 4px; writing-mode: vertical-rl; transform: rotate(180deg); color: #c4c4c4; }
```
